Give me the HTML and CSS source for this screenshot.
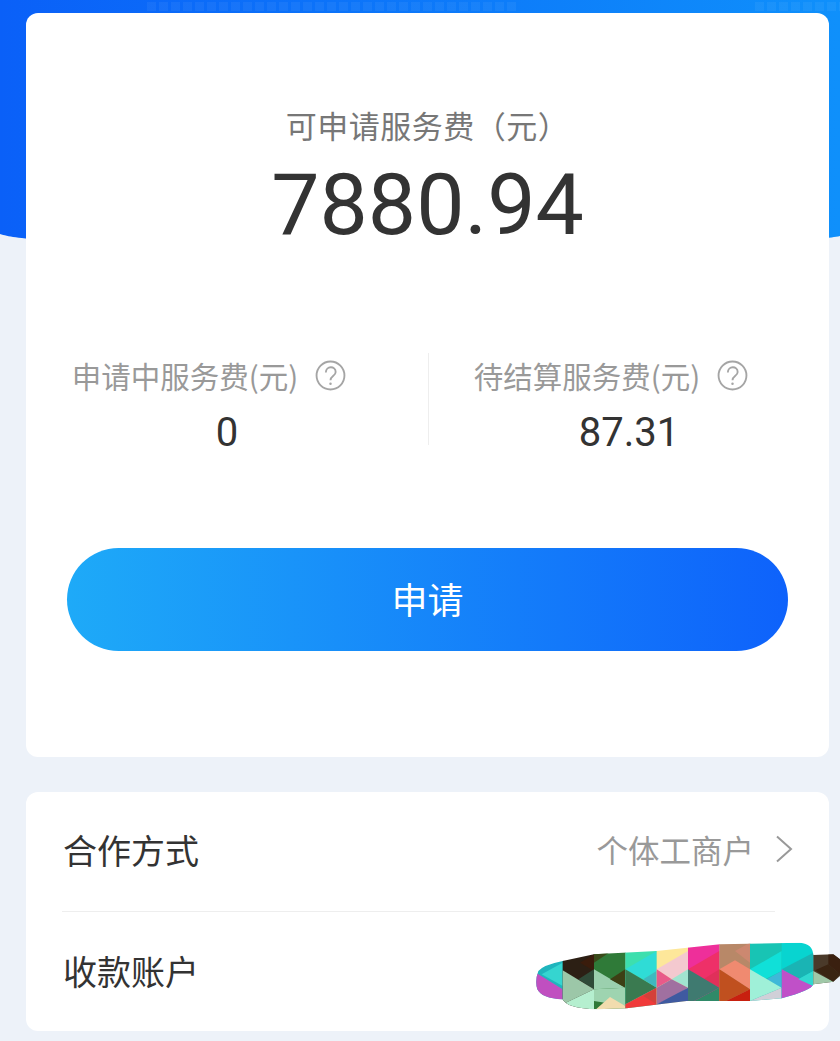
FILE: index.html
```html
<!DOCTYPE html>
<html>
  <head>
    <title>服务费</title>
    <link rel="stylesheet" href="styles.css">
  </head>
  <body>
    <div class="top-bg"></div>
    <div class="page">
      <!-- Balance card -->
      <div class="card balance-card">
        <div class="balance-label">可申请服务费（元）</div>
        <div class="balance-value">7880.94</div>

        <div class="stats">
          <div class="stat">
            <div class="stat-label">
              <span>申请中服务费(元)</span>
              <svg class="help-icon" viewBox="0 0 30 30">
                <circle cx="15" cy="15" r="13.5" />
                <path d="M10.5 12 C10.5 5.5 20 5.5 20 11.5 C20 15.5 15 15.5 15 19.5" />
                <circle class="dot" cx="15" cy="23" r="1.2" />
              </svg>
            </div>
            <div class="stat-value">0</div>
          </div>
          <div class="stat stat-right">
            <div class="stat-label">
              <span>待结算服务费(元)</span>
              <svg class="help-icon" viewBox="0 0 30 30">
                <circle cx="15" cy="15" r="13.5" />
                <path d="M10.5 12 C10.5 5.5 20 5.5 20 11.5 C20 15.5 15 15.5 15 19.5" />
                <circle class="dot" cx="15" cy="23" r="1.2" />
              </svg>
            </div>
            <div class="stat-value">87.31</div>
          </div>
        </div>

        <button class="apply-btn">申请</button>
      </div>

      <!-- Info card -->
      <div class="card info-card">
        <div class="row row-first">
          <span class="row-title">合作方式</span>
          <span class="row-right">
            <span class="row-value">个体工商户</span>
            <svg class="chevron" viewBox="0 0 18 28">
              <path d="M2 1.5 L16 14 L2 26.5" />
            </svg>
          </span>
        </div>
        <div class="row row-last">
          <span class="row-title">收款账户</span>
        </div>
        <!-- Scribbled-out account number -->
        <svg class="scribble" viewBox="108 60 912 210">
          <defs>
            <clipPath id="blob">
              <path d="M115 150 Q130 132 188 120 L282 100 L470 90 L660 70 L900 65 Q938 68 940 102 L1000 100 L1020 115 L1020 165 L1000 182 L940 190 Q935 208 845 232 L750 240 L560 240 L380 262 L290 265 Q200 262 188 235 Q125 232 112 205 Q104 180 115 150 Z" />
            </clipPath>
          </defs>
          <g clip-path="url(#blob)">
            <rect x="100" y="60" width="90" height="210" fill="#1fb5bd" />
            <polygon points="188,125 188,195 125,160" fill="#35d5d0" />
            <polygon points="100,150 188,205 188,240 100,240" fill="#c04fc0" />

            <rect x="188" y="60" width="95" height="210" fill="#2c1f14" />
            <polygon points="282,100 282,150 240,125" fill="#3a1c0c" />
            <polygon points="282,145 282,205 235,175" fill="#2f4a38" />
            <polygon points="188,148 282,205 188,250" fill="#9cc7a8" />
            <polygon points="188,250 282,205 282,270 188,270" fill="#b5efcf" />

            <rect x="282" y="60" width="95" height="210" fill="#2f7a38" />
            <polygon points="282,90 335,90 282,125" fill="#3a4a1a" />
            <polygon points="282,145 376,200 282,205" fill="#9bd0ae" />
            <polygon points="376,145 376,200 330,175" fill="#3d3f14" />
            <polygon points="282,205 376,200 376,255 282,240" fill="#9ed4b0" />
            <polygon points="282,270 330,228 376,255 376,270" fill="#f2dcae" />

            <rect x="376" y="60" width="95" height="210" fill="#3ddfae" />
            <polygon points="376,145 470,90 470,150 430,175" fill="#2fdcd6" />
            <polygon points="376,145 470,200 376,250" fill="#3a7a50" />
            <polygon points="470,150 470,200 430,175" fill="#3fb8c0" />
            <polygon points="376,250 470,200 470,270 376,270" fill="#f03a3a" />
            <polygon points="430,225 470,200 470,250" fill="#d4403a" />

            <rect x="470" y="60" width="95" height="210" fill="#fde79a" />
            <polygon points="470,145 564,90 564,150 515,175" fill="#f4c9cf" />
            <polygon points="564,145 564,200 515,175" fill="#a0e4d0" />
            <polygon points="470,145 515,175 470,200" fill="#e85a8a" />
            <polygon points="470,200 515,175 564,200 515,230 470,250" fill="#a070a0" />
            <polygon points="470,250 564,200 564,270 470,270" fill="#3f5aa0" />

            <rect x="564" y="60" width="95" height="210" fill="#ee2f9a" />
            <polygon points="564,145 658,90 658,150 610,175" fill="#ee3068" />
            <polygon points="658,145 658,200 610,175" fill="#e0305a" />
            <polygon points="564,145 658,200 564,250" fill="#3f7a70" />
            <polygon points="564,250 658,200 658,270 564,270" fill="#2f8a68" />

            <rect x="658" y="60" width="93" height="210" fill="#b88868" />
            <polygon points="705,90 750,65 750,125" fill="#cc8870" />
            <polygon points="658,145 705,118 750,145 750,205" fill="#f08a70" />
            <polygon points="658,145 750,205 658,250" fill="#c0501f" />
            <polygon points="658,250 750,205 750,270 658,270" fill="#c8200f" />

            <rect x="750" y="60" width="96" height="210" fill="#18c4b4" />
            <polygon points="750,145 845,90 845,150 795,175" fill="#10e0d8" />
            <polygon points="845,150 845,200 800,175" fill="#3fb8d8" />
            <polygon points="750,145 845,200 750,240" fill="#9ff0d8" />
            <polygon points="750,240 845,200 845,270 750,270" fill="#d0d0d8" />

            <rect x="845" y="60" width="96" height="210" fill="#08d4d0" />
            <polygon points="845,145 940,95 940,150 895,175" fill="#1ab4b4" />
            <polygon points="845,145 940,195 940,240 845,240" fill="#c050c8" />
            <polygon points="940,150 940,195 895,175" fill="#30d8d0" />

            <rect x="940" y="60" width="80" height="210" fill="#4a3a2a" />
            <polygon points="985,100 1020,100 1020,160 985,130" fill="#3a2010" />
            <polygon points="940,150 1000,182 940,200" fill="#a0c8a8" />
            <polygon points="985,130 1020,160 1000,182 945,148" fill="#3a2412" />
          </g>
        </svg>
      </div>
    </div>
  </body>
</html>
```

FILE: styles.css
```css
:root {
  --text: #333;
  --muted: #999;
  --line: #eee;
}

html,
body {
  margin: 0;
  height: 100%;
  overflow: hidden;
}

body {
  position: relative;
  background: #edf2f9;
  font-family: "Noto Sans CJK SC", "Noto Sans", sans-serif;
  color: var(--text);
}

.top-bg {
  position: absolute;
  top: 0;
  left: 0;
  right: 0;
  height: 248px;
  background:
    repeating-linear-gradient(90deg, rgba(255, 255, 255, 0.05) 0 9px, transparent 9px 12px) 147px 2px / 370px 9px no-repeat,
    repeating-linear-gradient(90deg, rgba(255, 255, 255, 0.05) 0 9px, transparent 9px 12px) 755px 2px / 85px 9px no-repeat,
    linear-gradient(90deg, #0a60f8 0%, #0f90fb 100%);
  clip-path: path("M0 0H840V236C820 240 800 243 420 246C40 243 20 240 0 234Z");
}

.page {
  position: relative;
  padding: 13px 11px 0 26px;
}

.card {
  background: #fff;
  border-radius: 12px;
}

.balance-card {
  height: 744px;
  padding-top: 88px;
  box-sizing: border-box;
}

.balance-label {
  text-align: center;
  font-size: 31px;
  line-height: 48px;
  color: #777;
  letter-spacing: 0.5px;
}

.balance-value {
  text-align: center;
  font-family: Roboto, sans-serif;
  font-size: 86px;
  line-height: 104px;
  margin-top: 4px;
  color: var(--text);
}

.stats {
  display: grid;
  grid-template-columns: 402px 1fr;
  grid-template-rows: 92px;
  margin-top: 96px;
}

.stat-right {
  border-left: 1px solid var(--line);
}

.stat-label {
  display: flex;
  align-items: center;
  justify-content: center;
  gap: 17px;
  padding-right: 36px;
  height: 46px;
  font-size: 29.5px;
  color: var(--muted);
}

.stat-label span {
  margin-bottom: 3px;
}

.help-icon {
  width: 31px;
  height: 31px;
  flex: none;
  margin-bottom: 1px;
  fill: none;
  stroke: #a5a5a5;
  stroke-width: 1.8;
}

.help-icon .dot {
  fill: #a5a5a5;
  stroke: none;
}

.stat-value {
  text-align: center;
  font-family: Roboto, sans-serif;
  font-size: 40px;
  line-height: 46px;
  margin-top: 11px;
  color: var(--text);
}

.apply-btn {
  display: block;
  width: 721px;
  height: 103px;
  margin: 103px 0 0 41px;
  padding: 0 0 3px;
  border: none;
  border-radius: 52px;
  background: linear-gradient(90deg, #1eaaf8 0%, #0e62fb 100%);
  color: #fff;
  font-family: inherit;
  font-size: 36px;
}

.info-card {
  position: relative;
  height: 239px;
  margin-top: 35px;
  padding: 0 54px 0 36px;
  box-sizing: border-box;
}

.row {
  display: flex;
  align-items: center;
  justify-content: space-between;
  height: 119px;
  box-sizing: border-box;
}

.row-first {
  height: 120px;
  border-bottom: 1px solid var(--line);
  padding-bottom: 5px;
}

.row-last {
  padding-bottom: 2px;
}

.row-title {
  font-size: 34px;
  margin-left: 1px;
  color: var(--text);
}

.row-right {
  display: flex;
  align-items: center;
  gap: 21px;
  margin-right: -18px;
}

.row-value {
  font-size: 31.5px;
  color: var(--muted);
}

.chevron {
  width: 18px;
  height: 28px;
  fill: none;
  stroke: #999;
  stroke-width: 2;
}

.scribble {
  position: absolute;
  left: 510px;
  top: 149px;
  width: 304px;
  height: 70px;
}
```
